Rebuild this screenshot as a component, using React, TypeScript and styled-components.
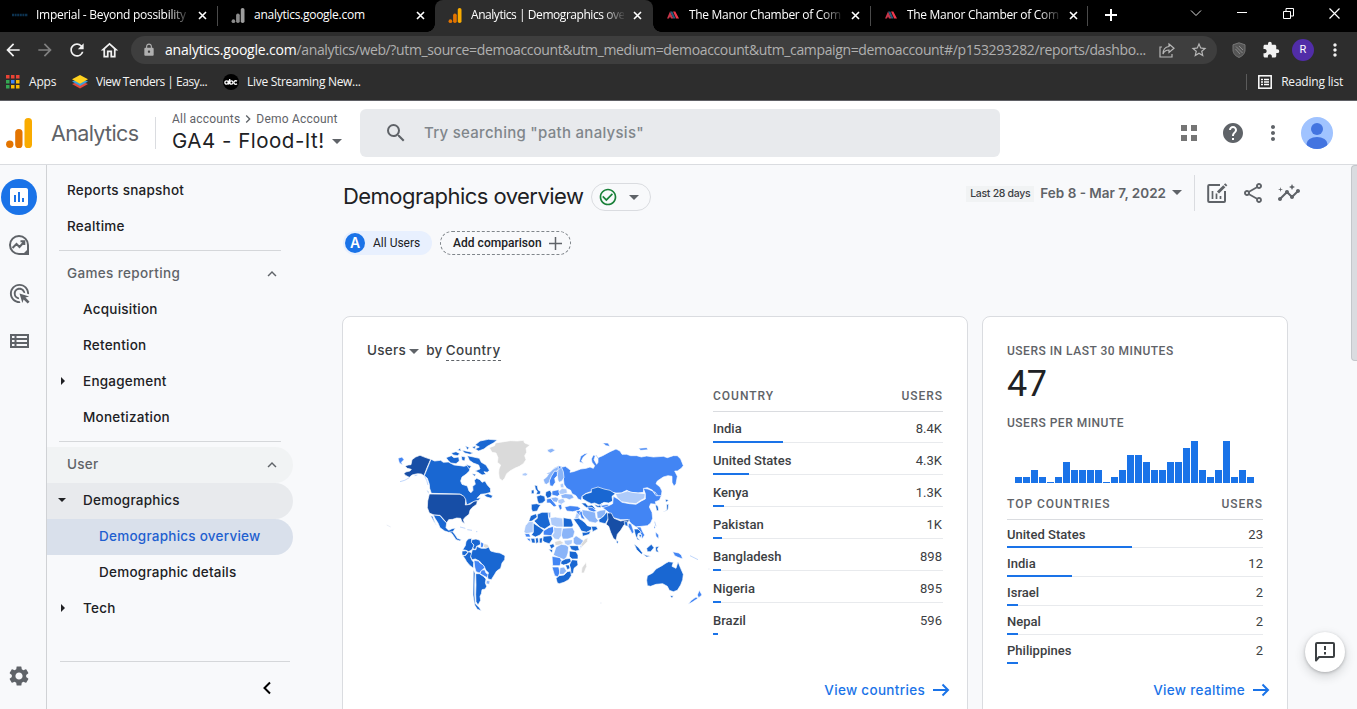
import React from 'react';
import styled, { createGlobalStyle, css } from 'styled-components';
import {
  MdOutlineFeedback, MdSettings, MdHelp, MdMoreVert, MdSearch, MdOutlineShare, MdOutlineInsights,
  MdArrowBack, MdArrowForward, MdRefresh, MdOutlineHome, MdLock, MdStarBorder, MdExtension,
  MdAdsClick, MdInsertChart, MdCheckCircleOutline, MdExpandLess, MdChevronRight,
} from 'react-icons/md';

const ui = `'Open Sans', 'Noto Sans', sans-serif`;
const gs = `Inter, 'Liberation Sans', sans-serif`;
const rb = `Roboto, 'Liberation Sans', sans-serif`;

const Global = createGlobalStyle`
  * { box-sizing: border-box; }
  body { margin: 0; background: #f8f9fa; overflow: hidden; }
  svg { display: block; flex: none; }
`;

const Page = styled.div`
  width: 1357px; height: 709px; overflow: hidden;
  display: flex; flex-direction: column; color: #202124; font-family: ${gs};
`;

/* ---------- browser frame ---------- */
const TabStrip = styled.div`
  height: 32px; background: #000; display: flex; flex: none; color: #fff; font: 12px/30px ${ui};
`;
const Tab = styled.div<{ $active?: boolean; $w: number }>`
  width: ${p => p.$w}px; height: 32px; display: flex; align-items: center; position: relative;
  padding: 0 0 2px 12px;
  ${p => p.$active && css`
    background: #2d2d2d; border-radius: 8px 8px 0 0;
    &::before, &::after { content: ''; position: absolute; bottom: 0; width: 8px; height: 8px; }
    &::before { left: -8px; background: radial-gradient(circle at 0 0, #000 7.5px, #2d2d2d 8px); }
    &::after { right: -8px; background: radial-gradient(circle at 100% 0, #000 7.5px, #2d2d2d 8px); }
  `}
`;
const TabIcon = styled.span`width: 16px; height: 16px; margin-right: 8px; display: flex; align-items: center; justify-content: center;`;
const TabTitle = styled.span<{ $fade?: boolean; $ls?: number }>`
  width: 153px; overflow: hidden; white-space: nowrap; letter-spacing: ${p => p.$ls ?? -0.27}px;
  ${p => p.$fade && css`mask-image: linear-gradient(90deg, #000 132px, transparent 155px);`}
`;
const TabClose = styled.svg`margin-left: 9px;`;
const TabSep = styled.i`position: absolute; right: 0; top: 6px; width: 1px; height: 20px; background: #4a4a4a;`;
const WindowButtons = styled.div`display: flex; margin-left: auto; height: 26px;`;
const WinButton = styled.span`width: 46px; display: flex; align-items: center; justify-content: center;`;
const NewTab = styled.span`width: 45px; height: 30px; display: flex; align-items: center; justify-content: center;`;

const Toolbar = styled.div`
  height: 36px; flex: none; background: #2d2d2d; display: flex; align-items: center; color: #e8eaed;
`;
const ToolButton = styled.span<{ $dim?: boolean; $shift?: number }>`
  width: 32px; display: flex; justify-content: center; color: ${p => (p.$dim ? '#808080' : '#f1f1f1')};
  margin-left: ${p => p.$shift ?? 0}px;
`;
const Omnibox = styled.div`
  width: 1086px; height: 28px; border-radius: 14px; background: #3e3e3e; display: flex; align-items: center;
  margin-left: 6px; padding-left: 11px; color: #b0b0b0; font: 14px/28px ${ui};
`;
const Url = styled.span`width: 986px; margin-left: 9px; white-space: nowrap; letter-spacing: -0.36px; b { font-weight: 400; color: #fff; letter-spacing: -0.2px; }`;
const OmniButton = styled.span`width: 32px; display: flex; justify-content: center; color: #b8b8b8;`;
const ProfileDot = styled.span`
  width: 22px; height: 22px; border-radius: 50%; background: #512da8; color: #fff;
  font: 11px/22px ${rb}; text-align: center;
`;
const Bookmarks = styled.div`
  height: 33px; flex: none; background: #2d2d2d; border-bottom: 1px solid #5f6065; display: flex;
  align-items: center; color: #f4f4f4; font: 12px/28px ${ui}; padding: 0 14px 5px 5px;
`;
const Bookmark = styled.span<{ $w?: number; $ls?: number }>`
  display: flex; align-items: center; gap: 8px; letter-spacing: ${p => p.$ls ?? -0.2}px; white-space: nowrap;
  ${p => p.$w && css`width: ${p.$w}px;`}
`;
const ReadingList = styled(Bookmark)`margin-left: auto; padding-left: 11px; gap: 9px; border-left: 1px solid #5b5b5b; line-height: 16px;`;

/* ---------- app header ---------- */
const Header = styled.header`
  height: 64px; flex: none; background: #fff; border-bottom: 1px solid #dadce0; display: flex; align-items: center;
`;
const Brand = styled.div`
  width: 156px; height: 32px; display: flex; align-items: center; border-right: 1px solid #dadce0;
  padding-left: 6px; font-size: 21.5px; color: #5f6368; letter-spacing: -0.65px;
  svg { margin-right: 19px; }
`;
const Property = styled.div`width: 204px; padding-left: 16px; white-space: nowrap;`;
const Crumbs = styled.div`
  display: flex; align-items: center; font: 12px/16px ${rb}; color: #5f6368; letter-spacing: 0.2px;
  margin-top: -1px;
`;
const PropertyName = styled.div`
  display: flex; align-items: center; gap: 7px; font-size: 20.5px; line-height: 26px; letter-spacing: 0.5px;
  padding-top: 1px; margin-bottom: -1px;
`;
const Search = styled.div`
  width: 640px; height: 48px; border-radius: 6px; background: #e8eaed; display: flex; align-items: center;
  padding-left: 24px; gap: 16px; color: #80868b; font-size: 15px; font-weight: 500; letter-spacing: 0.28px;
  svg { color: #5f6368; }
`;
const HeaderActions = styled.div`display: flex; align-items: center; margin-left: auto; padding-right: 24px; color: #5f6368; gap: 24px;`;
const HeaderMore = styled(MdMoreVert)`margin: 0 -8px;`;
const DotGrid = styled.i`
  width: 16px; height: 16px; display: grid; grid-template-columns: 6px 6px; grid-template-rows: 6px 6px; gap: 4px;
  &::before, &::after { content: ''; background: #757575; box-shadow: 0 10px #757575; width: 6px; height: 6px; }
`;

/* ---------- body ---------- */
const Body = styled.div`flex: 1; min-height: 0; display: flex; background: #f8f9fb;`;
const Rail = styled.aside`
  width: 47px; border-right: 1px solid #d0d2d5; display: flex; flex-direction: column; align-items: center;
  padding: 14px 8px 21px 0; color: #5f6368;
`;
const RailItem = styled.span<{ $on?: boolean }>`
  width: 36px; height: 36px; margin-bottom: 12px; border-radius: 50%; display: flex; align-items: center; justify-content: center; flex: none;
  ${p => p.$on && css`background: #1a73e8; color: #fff;`}
`;
const RailBottom = styled.span`margin-top: auto;`;
const Nav = styled.nav`width: 246px; display: flex; flex-direction: column; padding-top: 7px; font-size: 13.5px; font-weight: 500;`;
const NavItem = styled.div<{ $level?: number; $tone?: 'group' | 'muted' | 'parent' | 'active'; $lift?: boolean }>`
  height: 36px; flex: none; display: flex; align-items: center; border-radius: 0 18px 18px 0; position: relative;
  padding: 0 12px ${p => (p.$lift ? 2 : 0)}px ${p => 20 + (p.$level ?? 0) * 16}px; letter-spacing: 0.24px;
  > svg { margin-left: auto; position: relative; top: 1px; }
  ${p => (p.$tone === 'group' || p.$tone === 'muted') && css`color: #5f6368;`}
  ${p => p.$tone === 'group' && css`background: #f1f3f4;`}
  ${p => p.$tone === 'muted' && css`letter-spacing: 0.36px;`}
  ${p => p.$tone === 'parent' && css`background: #e8eaed;`}
  ${p => p.$tone === 'active' && css`background: #d9e0eb; color: #1f5fd0;`}
`;
const Marker = styled.i<{ $open?: boolean }>`
  position: absolute; left: 14px; border: 4px solid transparent;
  ${p => p.$open
    ? css`left: 11px; border-top-color: #202124; border-bottom: 0;`
    : css`border-left-color: #202124; border-right: 0;`}
`;
const NavRule = styled.hr<{ $after?: number }>`
  width: 222px; height: 1px; border: 0; background: #d5d7da; flex: none;
  margin: 6px 0 ${p => p.$after ?? 4}px 12px;
`;
const NavEnd = styled.hr`width: 230px; height: 1px; border: 0; background: #d5d7da; flex: none; margin: 34px 0 14px 13px;`;
const Collapse = styled.div`padding-left: 214px;`;

const Main = styled.main`flex: 1; position: relative; padding: 10px 0 0 49px; display: flex; flex-direction: column;`;
const TitleRow = styled.div`display: flex; align-items: center; height: 36px; padding-right: 56px;`;
const Title = styled.h1`
  margin: 6px 9px 0 1px; font-size: 22px; font-weight: 400; width: 239px; white-space: nowrap; letter-spacing: -0.54px; line-height: 28px;
`;
const StatusPill = styled.span`
  margin-top: 8px; width: 60px; height: 28px; border: 1px solid #dadce0; border-radius: 14px; display: flex; align-items: center;
  padding-left: 6px; gap: 11px; color: #188038;
`;
const Caret = styled.i`width: 0; height: 0; border: 5px solid transparent; border-top-color: #5f6368; border-bottom: 0;`;
const DateRange = styled.div`
  margin-left: auto; display: flex; align-items: center; gap: 6px; height: 36px; padding-right: 12px; border-right: 1px solid #dadce0;
  font-size: 13.5px; font-weight: 600; color: #5f6368; white-space: nowrap; padding-bottom: 1px;
`;
const RangeTag = styled.span`
  background: #f1f3f4; width: 68px; text-align: center; font-size: 10.5px; font-weight: 500; line-height: 16px; color: #3c4043;
  letter-spacing: -0.3px; margin-top: 2px;
`;
const TitleTools = styled.div`display: flex; gap: 12px; margin-left: 10px; color: #5f6368;`;
const ChipRow = styled.div`display: flex; gap: 8px; padding: 20px 0 0 1px; margin-bottom: 61px; font: 500 12px/22px ${rb};`;
const Chip = styled.span<{ $dashed?: boolean }>`
  height: 24px; border-radius: 12px; display: flex; align-items: center; white-space: nowrap;
  ${p => p.$dashed
    ? css`width: 131px; border: 1px dashed #80868b; padding-left: 12px; gap: 7px; letter-spacing: 0.03px;`
    : css`width: 89px; background: #e8f0fe; gap: 8px; padding-left: 2px; font-weight: 400;`}
`;
const ChipBadge = styled.b`
  width: 20px; height: 20px; border-radius: 50%; background: #1a73e8; color: #fff; text-align: center; font: 600 14px/20px ${gs};
`;
const Cards = styled.div`display: flex; gap: 14px;`;
const Card = styled.section<{ $w: number }>`
  width: ${p => p.$w}px; height: 440px; background: #fff; border: 1px solid #dadce0; border-radius: 8px; padding: 24px;
`;
const CardTitle = styled.div`
  display: flex; align-items: center; height: 20px; margin-bottom: 19px; font-size: 13.5px; font-weight: 500; color: #3c4043;
  letter-spacing: 0.3px; padding-bottom: 2px;
  i { margin: 2px 7px 0 3px; }
  span { margin-left: 3px; border-bottom: 1px dashed #5f6368; line-height: 19px; margin-top: 2px; letter-spacing: 0.4px; }
`;
const Split = styled.div`display: flex; justify-content: space-between; align-items: flex-start;`;
const MapSvg = styled.svg`margin: 45px 0 0 13px;`;
const Table = styled.div<{ $w: number }>`width: ${p => p.$w}px; font: 13px/16px ${rb}; color: #3c4043;`;
const TableHead = styled.div`
  height: 32px; border-bottom: 1px solid #dadce0; display: flex; align-items: center; justify-content: space-between;
  font-size: 12px; font-weight: 500; color: #5f6368; letter-spacing: 0.98px; margin-bottom: -1px;
`;
const TableRow = styled.div<{ $h: number }>`
  height: ${p => p.$h}px; padding-top: ${p => (p.$h === 32 ? 4 : 3)}px; display: flex; align-items: center; justify-content: space-between;
  position: relative; border-bottom: 1px solid #e8eaed; letter-spacing: 0.02px;
  &:last-child { border-bottom-color: transparent; }
  b { font-weight: 500; }
  span { margin-right: ${p => (p.$h === 32 ? 1 : 0)}px; }
`;
const RowBar = styled.i`position: absolute; left: 0; bottom: -1px; height: 2px; background: #1a73e8;`;
const CardLink = styled.div<{ $top: number }>`
  margin: ${p => p.$top}px -7px 0 0; height: 20px; display: flex; align-items: center; justify-content: flex-end; gap: 7px;
  color: #1a73e8; font-size: 13.5px; font-weight: 500; letter-spacing: 0.32px;
`;
const Label = styled.div`font: 500 12px/20px ${rb}; color: #5f6368; letter-spacing: 0.5px;`;
const BigNumber = styled.div`font: 36px/40px ${rb}; margin: 3px 0 9px; letter-spacing: -0.5px;`;
const Bars = styled.div`display: flex; align-items: flex-end; gap: 1px; height: 42px; margin: 8px 0 5px 8px;`;
const Bar = styled.i`width: 7px; background: #1a73e8;`;
const ScrollThumb = styled.i`
  position: absolute; right: 0; top: 0; width: 6px; height: 196px; background: #dadce0; border: 1px solid #c4c7cb; border-right: 0; border-radius: 4px 0 0 4px;
`;
const FeedbackButton = styled.span`
  position: absolute; right: 12px; bottom: 37px; width: 40px; height: 40px; border-radius: 50%; background: #fff; color: #3c4043;
  display: flex; align-items: center; justify-content: center; box-shadow: 0 1px 3px rgba(60,64,67,.3), 0 4px 8px 2px rgba(60,64,67,.15);
`;

/* ---------- drawings ---------- */
const GaLogo = ({ w, h, light = '#f9ab00', dark = '#e37400' }: { w: number; h: number; light?: string; dark?: string }) => (
  <svg width={w} height={h} viewBox="0 0 26 30">
    <rect x="18.5" y="0" width="7.5" height="30" rx="3.6" fill={light} />
    <rect x="9.2" y="11" width="7.3" height="19" rx="3.6" fill={dark} />
    <circle cx="3.8" cy="26.3" r="3.7" fill={dark} />
  </svg>
);
const ManorIcon = () => (
  <svg width="12" height="8" viewBox="0 0 12 8">
    <path d="M0 7.5L3 .5 6.5 7.5H4L3 5.5 2 7.5z" fill="#c8364a" />
    <path d="M3 .5h2.3L8.6 7.5H6.4z" fill="#2a5f7d" />
    <path d="M6 .5h2.3L12 7.5H9.2z" fill="#f0384d" />
  </svg>
);
const Close = () => (
  <TabClose width="9" height="9" viewBox="0 0 9 9"><path d="M1 1l7 7M8 1L1 8" stroke="#fff" strokeWidth="1.6" /></TabClose>
);
const ExploreIcon = () => (
  <svg width="22" height="22" viewBox="0 0 22 22" fill="none" stroke="#5f6368" strokeWidth="2">
    <path d="M20 20V11a9 9 0 1 0-9 9z" />
    <path d="M4.5 14l4-4 3 3 4.5-5M12.5 7.3H16.3V11" />
    <path d="M14.5 20.5L20.5 14.5V20.5z" fill="#5f6368" stroke="none" />
  </svg>
);
const LibraryIcon = () => (
  <svg width="19" height="14" viewBox="0 0 19 14" fill="none" stroke="#5f6368" strokeWidth="2">
    <rect x="1" y="1" width="17" height="12" /><path d="M1 5h17M1 9h17M5.500 1v12" />
  </svg>
);
const EditChartIcon = () => (
  <svg width="24" height="24" viewBox="0 0 24 24" fill="none" stroke="#5f6368" strokeWidth="2">
    <path d="M15 4H4.2a1 1 0 0 0-1 1v15a1 1 0 0 0 1 1H19a1 1 0 0 0 1-1V10" />
    <path d="M7.5 10v8M11.5 12.5V18M15.5 15v3" strokeWidth="1.7" />
    <path d="M13 11.5l6.3-6.3" strokeWidth="3" /><path d="M20 4.5l1.3-1.3" strokeWidth="3" />
  </svg>
);
const FeedbackIcon = () => (
  <svg width="24" height="24" viewBox="0 0 24 24" fill="none" stroke="currentColor" strokeWidth="2">
    <path d="M3 20.500V4a1 1 0 0 1 1-1h16a1 1 0 0 1 1 1v12a1 1 0 0 1-1 1H6z" strokeLinejoin="round" />
    <path d="M12 6v4M12 12v2.500" />
  </svg>
);

const shade = { n: '#dadada', a: '#aecbfa', b: '#8ab4f8', c: '#4285f4', d: '#1967d2', e: '#174ea6' };
type Shade = keyof typeof shade;
const land: [Shade, string][] = [
  ['e', 'M96 104L107 96 120 91 135 97 152 103 141 128 132 152 124 147 113 146 104 148 96 150 88 157 78 152 72 146 77 141 90 138 94 133 82 130 75 124 84 120 93 119z'],
  ['d', 'M133 152L142 130 153 103 164 108 182 106 190 112 205 111 222 120 240 122 252 124 262 121 270 128 268 138 258 148 246 156 242 168 246 178 262 183 267 198 273 203 279 196 278 184 286 178 283 166 290 160 300 164 306 172 315 168 322 180 331 190 332 202 318 206 302 208 291 220 302 218 296 226 280 230 268 236 260 240 257 224 247 211 240 207 154 205 149 190 148 178 142 160z'],
  ['d', 'M285 60L300 48 325 43 352 45 340 54 322 64 312 72 296 78 285 72 298 66zM262 92L280 96 298 100 304 112 318 120 328 136 322 142 312 140 318 148 306 150 294 142 285 138 300 132 296 120 280 114 268 106zM198 98L214 92 222 98 236 96 238 108 228 116 212 114 204 106zM214 84L228 80 240 86 232 92 220 90zM246 76L268 80 280 84 270 88 254 84zM244 94L256 96 254 108 246 106zM258 118L274 124 268 132zM232 76L240 70 244 78zM256 62L268 68 262 74zM276 66L288 62 284 72zM276 146L288 148 284 154zM312 210L324 206 338 212 334 220 320 216zM140 196L146 200 146 206z'],
  ['e', 'M148 207L240 208 252 214 257 224 256 240 270 238 282 229 292 227 290 238 276 248 270 256 267 268 254 278 250 284 254 296 246 290 242 280 230 279 218 283 206 284 200 294 190 282 180 271 162 270 148 264 142 248 143 228z'],
  ['d', 'M160 270L180 272 190 284 200 294 198 308 206 316 216 311 226 309 218 322 206 322 194 318 180 308 174 294 165 280zM152 272L158 274 164 290 170 302 162 290z'],
  ['d', 'M208 322L218 320 226 330 232 340 244 344 240 348 228 344 216 326z'],
  ['n', 'M328 68L344 62 346 54 372 50 392 47 412 48 430 46 434 54 450 60 438 70 440 82 434 92 438 104 430 116 418 124 404 130 390 138 380 146 374 160 367 167 358 160 356 144 357 132 362 120 352 112 354 98 348 84 336 82z'],
  ['a', 'M426 146L436 143 444 147 438 153 428 152z'],
  ['d', 'M258 350L264 342 274 340 276 352 282 362 276 374 266 380 258 376 248 374 256 362z'],
  ['d', 'M276 344L288 342 300 346 302 358 290 364 286 374 278 370 282 360 274 352z'],
  ['c', 'M302 350L312 356 310 366 302 368z'], ['n', 'M312 356L322 358 328 366 318 370 310 366z'],
  ['d', 'M246 378L258 377 264 382 254 392 246 390z'],
  ['d', 'M248 392L256 392 266 380 276 384 272 396 276 406 281 412 280 430 268 420 260 410 254 400z'],
  ['d', 'M277 374L288 374 290 364 304 370 318 370 326 366 332 378 346 382 360 384 375 392 374 404 366 414 362 430 350 438 344 448 334 464 324 462 322 450 326 444 318 436 312 424 298 408 286 402 276 404 272 394z'],
  ['c', 'M282 406L296 408 300 414 310 420 314 428 306 436 298 444 288 440 284 426z'],
  ['c', 'M300 446L304 436 314 434 318 444 324 448 322 458 314 454z'],
  ['b', 'M320 466L330 468 328 478 318 476z'],
  ['d', 'M287 446L298 446 310 454 318 462 316 474 320 484 316 492 306 494 304 506 300 514 302 526 294 540 288 530 287 508 288 480z'],
  ['d', 'M280 434L285 444 284 480 284 510 286 536 298 548 304 557 292 553 284 540 279 510z'],
  ['c', 'M498 146L512 140 524 128 536 122 548 126 556 124 572 136 570 142 580 140 592 136 602 132 618 130 630 126 640 130 644 122 636 112 634 102 640 90 646 92 642 104 650 118 654 112 654 98 668 92 690 80 708 72 720 78 726 88 740 88 752 92 770 92 784 96 800 93 820 96 850 94 862 98 880 92 892 92 902 102 910 122 904 130 892 138 884 138 892 154 888 176 882 184 876 172 876 154 864 152 850 156 832 168 828 176 840 186 846 198 844 212 836 218 826 214 818 196 802 188 792 190 790 202 774 204 752 202 740 196 724 204 708 204 694 202 680 196 662 192 648 190 632 200 616 206 606 214 604 226 594 222 588 212 576 206 572 196 560 190 552 178 550 158 534 150 z'],
  ['c', 'M598 110L602 94 614 86 624 84 610 96 604 108 612 116zM668 54L684 54 690 64 678 62zM776 70L800 68 804 74 782 76zM54 100L66 96 72 104 64 112 68 120 58 114zM824 200L832 210 830 224 824 214z'],
  ['b', 'M494 176L490 164 500 156 508 144 520 132 536 124 534 136 522 142 514 156 508 172 500 178z'],
  ['c', 'M510 182L508 168 514 154 524 138 532 140 532 152 524 160 526 172 518 184z'],
  ['b', 'M534 166L532 152 534 136 544 126 550 140 552 158 546 168 538 172zM502 74L516 70 526 76 512 84 504 80z'],
  ['d', 'M464 180L472 182 474 194 482 200 480 208 468 208 472 200 466 192z'], ['d', 'M454 196L462 194 462 206 454 206z'],
  ['d', 'M470 214L482 210 494 214 496 226 488 234 476 236 472 226z'],
  ['d', 'M454 238L470 236 482 240 476 248 472 258 458 260 454 252z'],
  ['d', 'M498 200L510 196 516 206 512 216 502 220 496 210z'], ['c', 'M516 198L536 194 540 208 532 214 516 210z'],
  ['c', 'M500 222L512 220 522 232 530 242 522 246 510 234 500 234z'], ['b', 'M512 218L528 216 538 222 530 232 520 230z'],
  ['a', 'M536 200L546 190 560 192 562 204 550 208 540 208z'], ['b', 'M542 210L556 206 576 208 582 218 568 224 558 220 546 220z'],
  ['a', 'M534 224L550 220 556 230 544 238 534 234z'], ['a', 'M540 178L550 174 552 188 542 188z'],
  ['c', 'M534 240L544 238 546 250 540 256zM554 246L570 242 592 244 602 250 596 256 578 260 560 258z'],
  ['d', 'M606 214L618 206 634 202 634 192 654 186 672 192 690 196 706 206 696 214 698 228 686 234 672 232 658 240 644 234 634 236 622 230 608 222z'],
  ['a', 'M706 206L724 204 742 198 756 202 774 204 796 206 794 220 782 226 768 236 748 234 724 230 712 218z'],
  ['d', 'M604 234L616 234 624 242 636 240 648 252 640 252 622 250 614 244zM642 238L656 242 666 236 662 248 650 246z'],
  ['c', 'M622 246L638 248 650 258 640 262 626 256zM588 258L600 256 606 264 598 272 592 268zM660 242L684 238 688 246 672 250z'],
  ['b', 'M606 254L620 256 630 258 646 262 648 278 656 288 646 294 628 290 614 276 606 266z'],
  ['b', 'M650 260L662 256 678 254 676 266 664 280 652 280z'],
  ['d', 'M656 284L668 276 680 262 688 268 684 282 676 296 658 292z'],
  ['a', 'M590 262L598 270 596 282 584 280z'], ['c', 'M598 262L606 258 608 270 616 284 604 280z'],
  ['d', 'M580 282L596 280 606 286 616 294 622 302 636 306 634 314 620 322 604 318 596 304z'],
  ['d', 'M606 322L620 322 632 318 628 328 608 334z'], ['d', 'M634 304L648 304 654 312 638 320z'],
  ['c', 'M668 248L686 242 698 236 700 214 714 222 726 232 748 236 768 238 784 228 796 222 796 206 790 190 804 192 818 198 828 212 844 212 838 226 826 230 828 238 812 236 808 246 816 262 818 280 812 294 802 302 784 304 768 306 754 296 744 284 722 284 700 278 686 262z'],
  ['e', 'M682 264L694 264 702 280 722 288 732 286 748 284 742 296 732 300 722 316 712 328 708 346 700 340 692 322 686 304 678 298 684 284z'],
  ['c', 'M746 294L754 298 758 310 762 322 756 326 750 314 744 304zM770 306L782 306 788 320 794 330 786 342 784 330z'],
  ['d', 'M732 290L742 290 744 304 736 302zM762 312L774 312 784 322 774 326 772 338 780 346 772 344 766 330zM776 328L786 330 780 338zM710 346L715 350 713 356 709 352zM762 356L776 368 788 384 784 388 770 374zM788 388L812 394 800 396zM800 370L814 358 822 368 812 380 802 380zM826 366L838 364 832 372 836 382 828 380zM826 238L834 244 836 256 830 258zM848 262L860 254 860 238 866 238 864 254 852 260zM856 222L866 226 858 232z'],
  ['c', 'M878 380L896 384 904 390 908 402 892 396 884 392zM826 320L836 330 836 342 828 334zM822 300L826 308 822 312z'],
  ['d', 'M802 452L818 444 828 432 846 422 858 414 866 410 880 412 876 424 888 430 894 410 902 430 910 448 908 464 902 480 892 496 880 500 868 496 862 484 848 476 828 478 812 484 802 482 800 466zM870 512L880 512 876 520z'],
  ['c', 'M958 496L966 510 956 518 952 510zM948 516L954 520 936 532 924 538 934 526z'],
  ['d', 'M452 272L468 266 472 276 456 288 446 290z'],
  ['d', 'M472 268L486 262 506 262 506 280 512 300 494 312 480 306 462 288 472 280z'],
  ['b', 'M504 262L512 262 512 280 506 278z'], ['a', 'M510 278L526 276 548 280 550 306 530 306 514 300z'],
  ['d', 'M550 278L574 282 580 300 576 306 550 306z'], ['a', 'M436 302L446 290 460 290 460 322 438 326 432 320z'],
  ['d', 'M460 294L478 306 492 316 480 330 466 336 454 330 460 322z'],
  ['c', 'M490 318L506 308 520 304 522 318 514 332 490 330z'], ['a', 'M520 306L530 308 546 308 546 330 536 344 524 342 516 332 522 322z'],
  ['b', 'M548 310L578 308 584 320 580 336 564 342 548 342 544 330z'],
  ['n', 'M524 350L540 346 552 354 540 360 526 362z'], ['a', 'M552 346L578 344 576 356 564 362 554 356z'],
  ['b', 'M580 340L588 332 600 340 612 348 604 360 588 360 580 354z'],
  ['n', 'M614 342L624 338 622 350 606 366 600 374 602 360z'], ['b', 'M600 362L606 362 602 370z'],
  ['d', 'M490 334L514 332 518 342 508 356 494 352 488 346zM466 340L474 338 476 352 468 356zM478 340L488 338 486 354 478 354zM452 340L464 340 466 354 456 354z'],
  ['c', 'M434 326L448 326 452 336 438 336zM440 340L450 340 452 350 444 346z'], ['d', 'M508 360L520 356 524 364 514 372zM506 372L518 374 516 384z'],
  ['b', 'M528 366L544 358 558 360 566 366 564 384 560 396 552 404 542 400 528 394 520 390z'],
  ['d', 'M568 362L594 362 598 376 586 378 574 374zM568 378L588 380 594 390 594 402 576 402 568 394z'],
  ['c', 'M516 394L540 398 544 406 540 422 518 422z'], ['d', 'M544 408L556 402 570 400 574 410 560 418 550 420 542 416z'],
  ['d', 'M576 404L592 406 594 420 582 430 580 444 572 448 572 432 568 420zM556 420L568 420 570 430 562 434z'],
  ['c', 'M516 426L536 426 540 442 534 456 524 452z'], ['b', 'M540 428L552 426 560 438 550 448 538 448z'],
  ['d', 'M528 460L538 452 552 450 562 440 572 438 574 452 566 464 552 472 538 476 532 474z'],
  ['n', 'M606 428L618 412 620 424 612 444 604 444z'],
];

const WorldMap = () => (
  <MapSvg width="330" height="195" viewBox="0 0 990 585">
    {land.map(([s, d], i) => <path key={i} d={d} fill={shade[s]} stroke="#fff" strokeWidth="2" strokeLinejoin="round" />)}
    <path d="M88 158l-14 8-14 4M104 152l8-2M134 154l6 12 4 14M240 306l16 4M262 314l14 2M288 320h4M648 90l6 10M824 290l4 14M930 392l24 12" stroke="#8ab4f8" strokeWidth="1.6" fill="none" />
    <path d="M20 300l12 6M984 432h5M660 534h5" stroke="#dfe6f2" strokeWidth="2" fill="none" />
  </MapSvg>
);

/* ---------- data ---------- */
const countries: [string, string, number][] = [
  ['India', '8.4K', 69.5], ['United States', '4.3K', 35.5], ['Kenya', '1.3K', 10.5], ['Pakistan', '1K', 8.5],
  ['Bangladesh', '898', 7.5], ['Nigeria', '895', 7.5], ['Brazil', '596', 5],
];
const live: [string, string, number][] = [
  ['United States', '23', 125.3], ['India', '12', 65.3], ['Israel', '2', 11], ['Nepal', '2', 11], ['Philippines', '2', 11],
];
const perMinute = [6, 6, 13, 6, 1, 6, 21, 13, 13, 13, 13, 1, 6, 13, 28, 28, 21, 13, 13, 21, 21, 35, 42, 13, 6, 13, 42, 6, 13, 6];
const appColors = ['#ea4335', '#ea4335', '#ea4335', '#34a853', '#4285f4', '#fbbc04', '#34a853', '#fbbc04', '#fbbc04'];

const CountryTable = ({ w, h, head, rows }: { w: number; h: number; head: string; rows: [string, string, number][] }) => (
  <Table $w={w}>
    <TableHead><span>{head}</span><span>USERS</span></TableHead>
    <div>
      {rows.map(([name, value, bar]) => (
        <TableRow key={name} $h={h}><b>{name}</b><span>{value}</span><RowBar style={{ width: bar }} /></TableRow>
      ))}
    </div>
  </Table>
);
const Arrow = () => (
  <svg width="18" height="14" viewBox="0 0 18 14" fill="none" stroke="#1a73e8" strokeWidth="2"><path d="M1 7h15M10.5 1.5L16 7l-5.5 5.5" /></svg>
);

export default function App() {
  return (
    <Page>
      <Global />
      <TabStrip>
        <Tab $w={218}>
          <TabIcon><svg width="16" height="4" viewBox="0 0 16 4"><path d="M0 2h16" stroke="#0d3350" strokeWidth="2.5" strokeDasharray="2 .6" /></svg></TabIcon>
          <TabTitle $fade>Imperial - Beyond possibility</TabTitle><Close /><TabSep />
        </Tab>
        <Tab $w={217}>
          <TabIcon><GaLogo w={14} h={15} light="#9e9e9e" dark="#8a8a8a" /></TabIcon>
          <TabTitle>analytics.google.com</TabTitle><Close />
        </Tab>
        <Tab $w={218} $active>
          <TabIcon><GaLogo w={14} h={15} /></TabIcon>
          <TabTitle $fade $ls={-0.45}>Analytics | Demographics ove</TabTitle><Close />
        </Tab>
        <Tab $w={218}>
          <TabIcon><ManorIcon /></TabIcon><TabTitle $fade $ls={-0.3}>The Manor Chamber of Com</TabTitle><Close /><TabSep />
        </Tab>
        <Tab $w={217}>
          <TabIcon><ManorIcon /></TabIcon><TabTitle $fade $ls={-0.3}>The Manor Chamber of Com</TabTitle><Close /><TabSep />
        </Tab>
        <NewTab><svg width="12" height="12" viewBox="0 0 12 12"><path d="M6 0v12M0 6h12" stroke="#fff" strokeWidth="2" /></svg></NewTab>
        <WindowButtons>
          <WinButton><svg width="12" height="8" viewBox="0 0 12 8"><path d="M1 1.5l5 5 5-5" stroke="#ddd" fill="none" /></svg></WinButton>
          <WinButton><svg width="10" height="2"><path d="M0 .5h10" stroke="#fff" /></svg></WinButton>
          <WinButton><svg width="11" height="11" viewBox="0 0 11 11" fill="none" stroke="#fff"><path d="M.5 3.5h7v7h-7zM3 3V.5h7.500v7.500H8" /></svg></WinButton>
          <WinButton><svg width="11" height="11" viewBox="0 0 11 11"><path d="M.5.5l10 10M10.500.5l-10 10" stroke="#fff" strokeWidth="1.2" /></svg></WinButton>
        </WindowButtons>
      </TabStrip>
      <Toolbar>
        <ToolButton $shift={-3}><MdArrowBack size={20} /></ToolButton>
        <ToolButton $dim><MdArrowForward size={20} /></ToolButton>
        <ToolButton><MdRefresh size={20} /></ToolButton>
        <ToolButton><MdOutlineHome size={21} /></ToolButton>
        <Omnibox>
          <MdLock size={14} />
          <Url><b>analytics.google.com</b>/analytics/web/?utm_source=demoaccount&amp;utm_medium=demoaccount&amp;utm_campaign=demoaccount#/p153293282/reports/dashbo...</Url>
          <OmniButton>
            <svg width="16" height="16" viewBox="0 0 16 16" fill="none" stroke="currentColor" strokeWidth="1.2"><path d="M3 5H1v10h12v-3M10 2l5 4.300L10 10.500V8C7 8 5 9.500 4 12c0-4 2-7 6-7.500z" /></svg>
          </OmniButton>
          <OmniButton><MdStarBorder size={18} /></OmniButton>
        </Omnibox>
        <ToolButton $shift={6}>
          <svg width="16" height="16" viewBox="0 0 16 16"><path d="M8 .8l6 2v5c0 4-3 6.500-6 7.600C5 14.300 2 11.800 2 7.800v-5z" fill="#555" stroke="#777" /><path d="M5 4.500l6.500 6.500M4.500 7l4.500 5M8 4l4 4" stroke="#8a8a8a" /></svg>
        </ToolButton>
        <ToolButton><MdExtension size={18} /></ToolButton>
        <ToolButton><ProfileDot>R</ProfileDot></ToolButton>
        <ToolButton><MdMoreVert size={20} /></ToolButton>
      </Toolbar>
      <Bookmarks>
        <Bookmark $w={67}>
          <svg width="16" height="16" viewBox="0 0 16 16">{appColors.map((c, i) => <rect key={i} x={1 + (i % 3) * 5} y={1 + Math.floor(i / 3) * 5} width="3.500" height="3.500" fill={c} />)}</svg>
          Apps
        </Bookmark>
        <Bookmark $w={151} $ls={-0.5}>
          <svg width="16" height="16" viewBox="0 0 16 16"><path d="M0 10l8 4.500L16 10l-8-3z" fill="#e2483d" /><path d="M0 7.500L8 12l8-4.500-8-3z" fill="#3aa0dc" /><path d="M0 5.200L8 1l8 4.200L8 9.800z" fill="#ffd21f" /></svg>
          View Tenders | Easy...
        </Bookmark>
        <Bookmark $ls={-0.3}>
          <svg width="16" height="16" viewBox="0 0 16 16"><circle cx="8" cy="8" r="8" fill="#000" /><g fill="none" stroke="#fff" strokeWidth="1.300"><circle cx="3.600" cy="8.500" r="1.700" /><path d="M5.500 6.500v4" /><circle cx="8.300" cy="8.500" r="1.700" /><path d="M6.700 5v5" /><path d="M14 7.300a1.800 1.800 0 1 0 0 2.500" /></g></svg>
          Live Streaming New...
        </Bookmark>
        <ReadingList>
          <svg width="14" height="14" viewBox="0 0 14 14" fill="none" stroke="#fff"><rect x=".8" y=".8" width="12.400" height="12.400" strokeWidth="1.500" /><path d="M3 4.500h2M6 4.500h5M3 7h2M6 7h5M3 9.500h2M6 9.500h5" strokeWidth="1.300" /></svg>
          Reading list
        </ReadingList>
      </Bookmarks>

      <Header>
        <Brand><GaLogo w={26} h={30} />Analytics</Brand>
        <Property>
          <Crumbs>All accounts<MdChevronRight size={16} />Demo Account</Crumbs>
          <PropertyName>GA4 - Flood-It!<Caret /></PropertyName>
        </Property>
        <Search><MdSearch size={24} />Try searching "path analysis"</Search>
        <HeaderActions>
          <DotGrid /><MdHelp size={24} /><HeaderMore size={24} />
          <svg width="32" height="32" viewBox="0 0 32 32"><clipPath id="face"><circle cx="16" cy="16" r="16" /></clipPath><g clipPath="url(#face)"><rect width="32" height="32" fill="#a0c3ff" /><circle cx="16" cy="12" r="6" fill="#4374e0" /><ellipse cx="16" cy="27" rx="10.500" ry="7" fill="#4374e0" /></g></svg>
        </HeaderActions>
      </Header>

      <Body>
        <Rail>
          <RailItem $on><MdInsertChart size={24} /></RailItem>
          <RailItem><ExploreIcon /></RailItem>
          <RailItem><MdAdsClick size={23} /></RailItem>
          <RailItem><LibraryIcon /></RailItem>
          <RailBottom><MdSettings size={24} /></RailBottom>
        </Rail>
        <Nav>
          <NavItem>Reports snapshot</NavItem>
          <NavItem>Realtime</NavItem>
          <NavRule />
          <NavItem $tone="muted">Games reporting<MdExpandLess size={18} /></NavItem>
          <NavItem $level={1}>Acquisition</NavItem>
          <NavItem $level={1}>Retention</NavItem>
          <NavItem $level={1}><Marker />Engagement</NavItem>
          <NavItem $level={1}>Monetization</NavItem>
          <NavRule $after={5} />
          <NavItem $tone="group" $lift>User<MdExpandLess size={18} /></NavItem>
          <NavItem $level={1} $tone="parent" $lift><Marker $open />Demographics</NavItem>
          <NavItem $level={2} $tone="active" $lift>Demographics overview</NavItem>
          <NavItem $level={2} $lift>Demographic details</NavItem>
          <NavItem $level={1} $lift><Marker />Tech</NavItem>
          <NavEnd />
          <Collapse><svg width="12" height="24" viewBox="0 0 12 24"><path d="M9 6.500L3.500 12 9 17.500" stroke="#000" strokeWidth="2" fill="none" /></svg></Collapse>
        </Nav>
        <Main>
          <TitleRow>
            <Title>Demographics overview</Title>
            <StatusPill><MdCheckCircleOutline size={20} /><Caret /></StatusPill>
            <DateRange><RangeTag>Last 28 days</RangeTag>Feb 8 - Mar 7, 2022<Caret /></DateRange>
            <TitleTools><EditChartIcon /><MdOutlineShare size={24} /><MdOutlineInsights size={24} /></TitleTools>
          </TitleRow>
          <ChipRow>
            <Chip><ChipBadge>A</ChipBadge>All Users</Chip>
            <Chip $dashed>Add comparison<svg width="13" height="13" viewBox="0 0 13 13"><path d="M6.500 0v13M0 6.500h13" stroke="#5f6368" strokeWidth="1.500" /></svg></Chip>
          </ChipRow>
          <Cards>
            <Card $w={626}>
              <CardTitle>Users<Caret />by<span>Country</span></CardTitle>
              <Split><WorldMap /><CountryTable w={230} h={32} head="COUNTRY" rows={countries} /></Split>
              <CardLink $top={45}>View countries<Arrow /></CardLink>
            </Card>
            <Card $w={306}>
              <Label>USERS IN LAST 30 MINUTES</Label>
              <BigNumber>47</BigNumber>
              <Label>USERS PER MINUTE</Label>
              <Bars>{perMinute.map((v, i) => <Bar key={i} style={{ height: v }} />)}</Bars>
              <CountryTable w={256} h={29} head="TOP COUNTRIES" rows={live} />
              <CardLink $top={16}>View realtime<Arrow /></CardLink>
            </Card>
          </Cards>
          <ScrollThumb />
          <FeedbackButton><FeedbackIcon /></FeedbackButton>
        </Main>
      </Body>
    </Page>
  );
}
